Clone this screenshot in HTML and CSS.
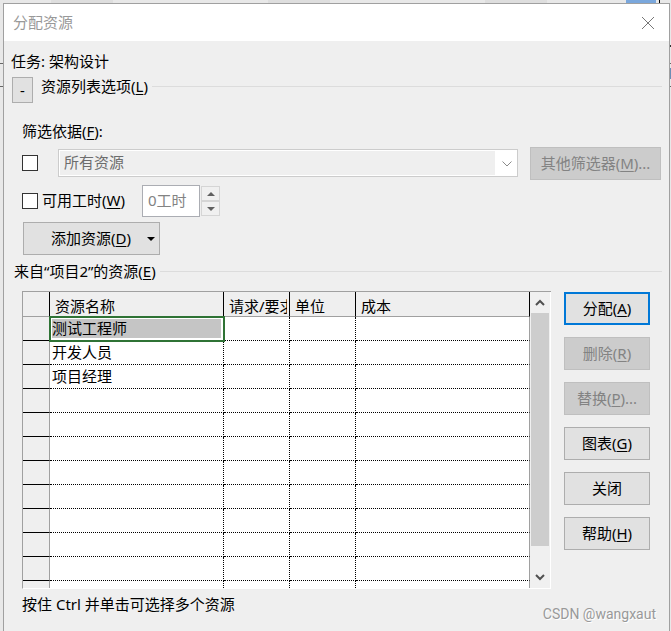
FILE: index.html
```
<!DOCTYPE html>
<html lang="zh-CN">
<head>
    <meta charset="UTF-8">
    <title>分配资源</title>
    <link rel="stylesheet" href="styles.css">
</head>
<body>
    <main class="dialog">
        <header class="titlebar">
            <h1>分配资源</h1>
            <button class="close" type="button" aria-label="关闭窗口">
                <svg width="12" height="12" viewBox="0 0 12 12"><path d="M0 0L12 12M12 0L0 12" stroke="#777" fill="none"/></svg>
            </button>
        </header>
        <div class="content">
            <p class="task">任务: 架构设计</p>
            <div class="legend options">
                <button class="btn toggle" type="button">-</button>
                <h2>资源列表选项(<u>L</u>)</h2>
            </div>

            <section class="filters">
                <label for="filter">筛选依据(<u>F</u>):</label>
                <div class="row">
                    <input type="checkbox" id="useFilter" aria-label="筛选依据">
                    <div class="combo">
                        <select id="filter" disabled>
                            <option>所有资源</option>
                        </select>
                        <svg width="10" height="6" viewBox="0 0 10 6"><path d="M0.5 0.5L5 5L9.5 0.5" stroke="#8a8a8a" fill="none"/></svg>
                    </div>
                    <button class="btn more" type="button" disabled>其他筛选器(<u>M</u>)...</button>
                </div>
                <div class="row work">
                    <input type="checkbox" id="useWork">
                    <label for="useWork">可用工时(<u>W</u>)</label>
                    <input type="text" class="hours" value="0工时" aria-label="可用工时" disabled>
                    <div class="spinner">
                        <button type="button" aria-label="增加" disabled><svg width="8" height="4" viewBox="0 0 8 4"><path d="M0 4L4 0L8 4Z" fill="#606060"/></svg></button>
                        <button type="button" aria-label="减少" disabled><svg width="8" height="4" viewBox="0 0 8 4"><path d="M0 0L4 4L8 0Z" fill="#606060"/></svg></button>
                    </div>
                </div>
                <button class="btn add" type="button">
                    <span>添加资源(<u>D</u>)</span>
                    <svg width="8" height="4" viewBox="0 0 8 4"><path d="M0 0H8L4 4Z" fill="#000"/></svg>
                </button>
            </section>

            <div class="legend source">
                <h2>来自“项目2”的资源(<u>E</u>)</h2>
            </div>

            <section class="resources">
                <div class="grid">
                    <table>
                        <colgroup>
                            <col class="col-head"><col class="col-name"><col class="col-small"><col class="col-small"><col>
                        </colgroup>
                        <thead>
                            <tr><th></th><th>资源名称</th><th><span>请求/要求</span></th><th>单位</th><th>成本</th></tr>
                        </thead>
                        <tbody>
                            <tr><th></th><td class="selected">测试工程师</td><td></td><td></td><td></td></tr>
                            <tr><th></th><td>开发人员</td><td></td><td></td><td></td></tr>
                            <tr><th></th><td>项目经理</td><td></td><td></td><td></td></tr>
                            <tr><th></th><td></td><td></td><td></td><td></td></tr>
                            <tr><th></th><td></td><td></td><td></td><td></td></tr>
                            <tr><th></th><td></td><td></td><td></td><td></td></tr>
                            <tr><th></th><td></td><td></td><td></td><td></td></tr>
                            <tr><th></th><td></td><td></td><td></td><td></td></tr>
                            <tr><th></th><td></td><td></td><td></td><td></td></tr>
                            <tr><th></th><td></td><td></td><td></td><td></td></tr>
                            <tr><th></th><td></td><td></td><td></td><td></td></tr>
                            <tr class="partial"><th></th><td></td><td></td><td></td><td></td></tr>
                        </tbody>
                    </table>
                    <div class="scrollbar">
                        <button type="button" aria-label="向上滚动"><svg width="10" height="7" viewBox="0 0 10 7"><path d="M1 6L5 2L9 6" stroke="#505050" stroke-width="2" fill="none"/></svg></button>
                        <div class="thumb"></div>
                        <button class="down" type="button" aria-label="向下滚动"><svg width="10" height="7" viewBox="0 0 10 7"><path d="M1 1L5 5L9 1" stroke="#505050" stroke-width="2" fill="none"/></svg></button>
                    </div>
                </div>
                <div class="actions">
                    <button class="btn default" type="button">分配(<u>A</u>)</button>
                    <button class="btn" type="button" disabled>删除(<u>R</u>)</button>
                    <button class="btn" type="button" disabled>替换(<u>P</u>)...</button>
                    <button class="btn" type="button">图表(<u>G</u>)</button>
                    <button class="btn" type="button">关闭</button>
                    <button class="btn" type="button">帮助(<u>H</u>)</button>
                </div>
            </section>
            <p class="hint">按住 Ctrl 并单击可选择多个资源</p>
        </div>
        <span class="watermark">CSDN @wangxaut</span>
    </main>
</body>
</html>
```
FILE: styles.css
```
* { box-sizing: border-box; }
body {
    display: flex;
    min-height: 100vh;
    margin: 0;
    padding: 3px 1px 0 3px;
    /* slivers of the project sheet behind the dialog */
    background:
        linear-gradient(#7aa7dc, #7aa7dc) right 15px top 0 / 30px 3px no-repeat,
        linear-gradient(#000, #000) right 11px top 0 / 1px 3px no-repeat,
        linear-gradient(#dedede, #dedede) 51px 0 / 62px 3px no-repeat,
        linear-gradient(#dedede, #dedede) 268px 0 / 62px 3px no-repeat,
        linear-gradient(#dedede, #dedede) 485px 0 / 62px 3px no-repeat,
        linear-gradient(#333, #333) right 0 top 45px / 1px 2px no-repeat,
        linear-gradient(#6c8eb5, #6c8eb5) right 0 top 68px / 1px 11px no-repeat,
        linear-gradient(#666, #666) 0 63px / 100% 1px no-repeat,
        linear-gradient(#666, #666) 0 86px / 100% 1px no-repeat,
        #e8e8e8;
    font: 15px/18px "Noto Sans", "Noto Sans CJK SC", sans-serif;
    color: #000;
}
h1, h2, p { margin: 0; font-size: 15px; font-weight: normal; }
button, input, select { margin: 0; padding: 0; font: inherit; color: inherit; }
svg { display: block; }
u { text-underline-offset: 2px; }

.dialog {
    position: relative;
    flex: 1;
    min-width: 0;
    border: 1px solid #a0a0a0;
    border-bottom: 0;
    background: #efefef;
}
.titlebar {
    display: flex;
    align-items: center;
    justify-content: space-between;
    height: 37px;
    padding: 0 15px 0 9px;
    background: #fff;
    color: #999;
}
.titlebar h1 { padding-bottom: 2px; }
.close { border: 0; background: none; }
.content { padding: 11px 7px 0 8px; }
.task { margin-left: -1px; }

.btn { height: 33px; padding-bottom: 2px; border: 1px solid #adadad; background: #e1e1e1; }
.btn:disabled { border-color: #bfbfbf; background: #ccc; color: #838383; }
.btn.default { border: 2px solid #0078d7; }
.btn.toggle { width: 21px; height: 26px; padding: 0; }

/* heading followed by a rule to the right edge */
.legend { display: flex; }
.legend::after { content: ""; flex: 1; height: 1px; margin: 9px 0 0 4px; background: #dcdcdc; }
.options { margin-top: 7px; }
.options h2 { margin-left: 8px; }
.source { margin: 7px 0 11px 2px; }

.filters { padding: 19px 1px 0 10px; }
.filters > label { display: block; }
.row { display: flex; align-items: center; margin-top: 5px; }
.filters > label + .row { margin-top: 7px; }
input[type="checkbox"] {
    appearance: none;
    width: 16px;
    height: 16px;
    border: 1px solid #333;
    background: #fff;
}
.combo { position: relative; flex: 1; margin: 0 12px 0 20px; }
.combo select {
    display: block;
    appearance: none;
    width: 100%;
    height: 28px;
    padding: 0 0 2px 5px;
    border: 1px solid #ccc;
    box-shadow: inset 0 0 0 1px #fff;
    background: linear-gradient(#fff, #fff) right / 22px 100% no-repeat #efefef;
    color: #6d6d6d;
    opacity: 1;
}
.combo svg { position: absolute; top: 12px; right: 6px; }
.more { width: 131px; }
.row > .combo, .row > input[type="checkbox"] { margin-bottom: 1px; }
.work label { width: 100px; margin-left: 4px; padding-bottom: 2px; }
.hours { width: 58px; height: 32px; padding: 0 0 4px 5px; border: 1px solid #abadb3; background: #fff; color: #838383; }
.spinner { margin-left: 1px; }
.spinner button { display: flex; align-items: center; justify-content: center; width: 19px; height: 15px; border: 1px solid #d5d5d5; background: #f0f0f0; }
.add { display: flex; align-items: center; justify-content: space-between; width: 137px; margin: 5px 0 0 1px; padding: 0 4px 0 27px; }
.add span { padding-bottom: 2px; }

.resources { display: flex; margin-left: 10px; padding-right: 12px; }
.grid { display: flex; flex: 1; min-width: 0; border: 1px solid #a0a0a0; border-width: 1px 0 0 1px; border-bottom: 1px solid #fff; background: #fff; }
table { flex: 1; width: 0; table-layout: fixed; border-collapse: separate; border-spacing: 0; }
.col-head { width: 27px; }
.col-name { width: 174px; }
.col-small { width: 66px; }
th, td {
    height: 24px;
    padding: 0 0 2px 2px;
    border: 0 dotted #000;
    border-width: 0 1px 1px 0;
    font-weight: normal;
    text-align: left;
    white-space: nowrap;
    overflow: hidden;
}
thead th { height: 25px; padding: 4px 2px 0 5px; border-style: solid; border-bottom-color: #a0a0a0; background: #efefef; }
thead span { display: block; overflow: hidden; }
tbody th { border-style: solid; border-right-color: #a0a0a0; background: #efefef; }
td:last-child { border-right: 1px solid #a0a0a0; }
.selected { outline: 2px solid #2f7335; outline-offset: -1px; box-shadow: inset 0 0 0 2px #fff; background: #c5c5c5; }
.partial th, .partial td { height: 7px; border-bottom: 0; }

.scrollbar { display: flex; flex-direction: column; width: 21px; padding: 0 1px; border-right: 1px solid #fff; background: #f0f0f0; }
.scrollbar button { display: flex; align-items: center; justify-content: center; height: 21px; border: 0; background: none; }
.thumb { height: 233px; background: #cdcdcd; }
.scrollbar .down { margin-top: auto; }

.actions { display: flex; flex-direction: column; gap: 12px; width: 86px; margin: 1px 0 0 13px; }
.hint { margin: 6px 0 0 10px; }
.watermark { position: absolute; right: 13px; bottom: 7px; font: 14px/20px Roboto, sans-serif; color: #999; text-shadow: 1px 1px #fff; }
```
